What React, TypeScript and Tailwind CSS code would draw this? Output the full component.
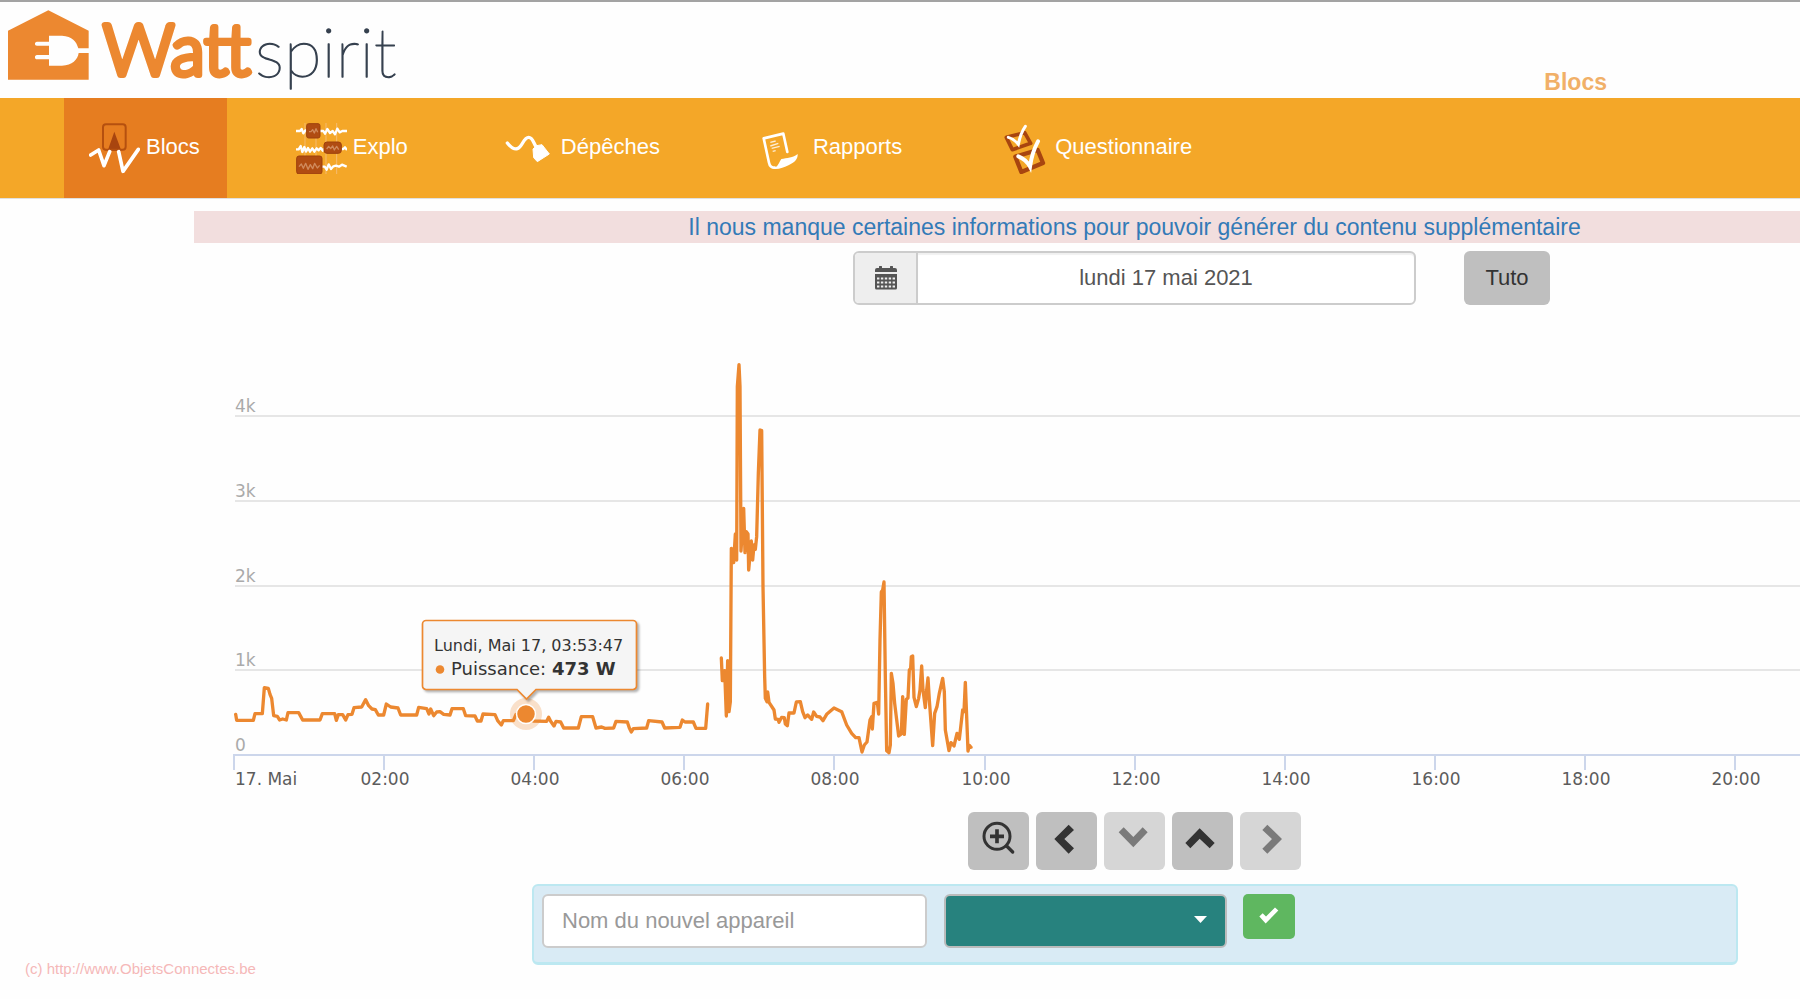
import type { ReactNode } from "react";

const NIGHT =
  "47,343 50,361 100,361 105,341 127,341 133,263 145,265 150,283 155,295 161,347 172,349 179,360 188,357 199,360 204,338 236,338 248,360 300,360 307,341 344,341 349,361 355,344 368,344 377,360 384,344 396,343 402,323 425,321 437,299 446,317 456,327 466,329 475,345 491,345 499,312 512,321 534,324 542,345 590,345 596,322 620,326 627,342 632,327 641,347 650,336 660,335 671,343 690,345 696,326 730,326 737,347 765,348 772,363 783,363 789,342 825,344 833,362 844,375 850,362 880,362 888,343 918,343 940,363 980,364 986,352 992,364 1002,378 1008,364 1022,366 1031,384 1075,384 1084,350 1118,350 1128,384 1145,381 1155,385 1181,384 1188,364 1222,366 1228,384 1234,396 1240,386 1280,384 1286,362 1326,366 1334,384 1380,382 1387,360 1395,366 1420,366 1428,385 1457,385 1463,312";
const MORNING =
  "94,954 97,1022 104,992 109,1128 113,962 117,1115 121,1085 124,625 131,668 136,582 140,660 142,140 147,74 150,140 153,633 161,505 165,638 169,575 174,582 176,690 184,603 188,660 192,615 196,628 200,590 205,400 210,270 215,272 219,740 224,1010 226,1075 231,1085 233,1056 237,1087 252,1110 256,1137 264,1138 267,1147 275,1132 283,1133 286,1152 292,1157 297,1119 312,1119 319,1086 331,1085 338,1115 345,1133 353,1125 365,1138 371,1116 380,1129 390,1131 399,1142 410,1123 432,1104 455,1115 470,1155 485,1180 497,1193 507,1193 516,1236 523,1215 531,1206 540,1140 545,1130 547,1167 552,1090 562,1087 566,1122 570,900 574,756 578,750 582,726 586,1010 590,1232 597,1238 601,1215 604,1000 609,1030 614,1090 626,1188 634,1182 638,1070 643,1183 649,1078 654,1074 658,990 662,985 664,950 668,948 672,1072 679,1100 686,1075 690,1050 695,978 699,1050 706,1103 710,1050 714,1014 718,1080 728,1217 734,1120 741,1100 748,1060 758,1015 763,1055 766,1170 777,1232 783,1208 792,1218 801,1180 808,1198 818,1110 822,1115 826,1027 830,1130 834,1233 838,1216 843,1222";

const Y_TICKS = [
  { label: "4k", y: 96 },
  { label: "3k", y: 181 },
  { label: "2k", y: 266 },
  { label: "1k", y: 350 },
  { label: "0", y: 435 },
];
const HOURS = ["02:00", "04:00", "06:00", "08:00", "10:00", "12:00", "14:00", "16:00", "18:00", "20:00"];

function Chart() {
  return (
    <svg className="block h-[478px] w-full font-['DejaVu_Sans',sans-serif]" role="img" aria-label="Puissance, lundi 17 mai 2021">
      {Y_TICKS.map((t) => (
        <g key={t.label}>
          {t.label !== "0" && <line x1="41" x2="100%" y1={t.y} y2={t.y} stroke="#e6e6e6" strokeWidth="2" />}
          <text x="41" y={t.y - 4} fontSize="17" fill="#aaa">{t.label}</text>
        </g>
      ))}
      <line x1="39" x2="100%" y1="435" y2="435" stroke="#ccd6eb" strokeWidth="2" />
      <line x1="40" x2="40" y1="435" y2="450" stroke="#ccd6eb" strokeWidth="2" />
      <text x="41" y="465" fontSize="17" fill="#5c5c5c">17. Mai</text>
      {HOURS.map((h, i) => {
        const x = Math.round(40 + (i + 1) * 150.1);
        return (
          <g key={h}>
            <line x1={x} x2={x} y1="435" y2="450" stroke="#ccd6eb" strokeWidth="2" />
            <text x={x + 1} y="465" fontSize="17" fill="#5c5c5c" textAnchor="middle">{h}</text>
          </g>
        );
      })}
      <g fill="none" stroke="#ec8830" strokeWidth="10" strokeLinejoin="round" strokeLinecap="round">
        <polyline points={NIGHT} transform="translate(26 280) scale(.33333)" />
        <polyline points={MORNING} transform="translate(496 20) scale(.33333)" />
      </g>
      <circle cx="332" cy="394" r="16" fill="#ec8830" fillOpacity=".25" />
      <circle cx="332" cy="394" r="9.5" fill="#ec8830" stroke="#fff" strokeWidth="1.5" />
      <path
        d="M232 300.500H439a3.500 3.500 0 0 1 3.500 3.500V366a3.500 3.500 0 0 1-3.500 3.500H342l-9.500 9.500-9.500-9.500H232a3.500 3.500 0 0 1-3.500-3.500V304a3.500 3.500 0 0 1 3.500-3.500z"
        fill="#f7f7f7"
        fillOpacity=".97"
        stroke="#ec8830"
        strokeWidth="1.700"
        className="drop-shadow-[2px_2px_1px_rgba(0,0,0,0.3)]"
      />
      <text x="240" y="331" fontSize="16" fill="#333">Lundi, Mai 17, 03:53:47</text>
      <circle cx="246" cy="349.500" r="4.300" fill="#ec8830" />
      <text x="257" y="355" fontSize="18" fill="#333">
        Puissance: <tspan fontWeight="bold">473 W</tspan>
      </text>
    </svg>
  );
}

function Logo() {
  return (
    <a href="#" aria-label="Wattspirit" className="flex items-start pl-2">
      <svg className="mt-[8px] h-[71px] w-[81px]" viewBox="0 0 243 213">
        <path d="M0 62 121 1l121 61v53h-31c-6-21-18-36-49-38h-39v18H87c-8 0-8 12 0 12h36v28H87c-8 0-8 13 0 13h36v19h39c31-1 47-18 50-38h30v80H0z" fill="#ec8830" />
      </svg>
      <svg className="h-24 w-[312px] font-['Lato',sans-serif]" viewBox="0 0 312 96" strokeLinejoin="round">
        <text x="14" y="73" fontSize="70" fontWeight="300" fill="#ec8830" stroke="#ec8830" strokeWidth="6">Watt</text>
        <text x="166" y="75" fontSize="69" fontWeight="200" fill="#36414f" stroke="#36414f" strokeWidth="1.300">spirit</text>
      </svg>
    </a>
  );
}

function BlocsIcon() {
  return (
    <svg className="size-[51px]" viewBox="0 0 153 153" fill="none">
      <path d="M76 26 97 83H56z" fill="#a8450f" />
      <rect x="42" y="4" width="68" height="76" rx="9" stroke="#b5500f" strokeWidth="6" />
      <path d="M5 96l24-15 16 47 17-42M89 86l13 59 46-66" stroke="#fff" strokeWidth="11" strokeLinecap="round" strokeLinejoin="round" />
    </svg>
  );
}

function ExploIcon() {
  return (
    <svg className="size-[51px]" viewBox="0 0 153 153" fill="none" strokeLinejoin="round">
      <path d="M27 0v153M60 0v153M90 0v153M122 0v153" stroke="#f7c9a0" strokeOpacity=".6" strokeWidth="3" />
      <g stroke="#fff" strokeWidth="7">
        <path d="M0 24h12l5-6 5 13 6-9h4M72 24h10l5 8 7-14 8 12 8-6 7 10 7-17 7 11 8-4h14" />
        <path d="M0 79h8l6-10 5 18 6-15 5 14 6-11 6 11 7-10 6 10 7-10 6 6 6-7 6 8 4-6M136 78h6l5-5 6 8" />
        <path d="M78 131h8l6 9 6-16 7 14 7-8 8-2 9 3 9-6 14 6" />
      </g>
      <g fill="#b04c12" stroke="#9d400c" strokeWidth="3">
        <rect x="32" y="2" width="40" height="43" rx="6" />
        <rect x="84" y="57" width="52" height="34" rx="9" />
        <rect x="2" y="99" width="76" height="54" rx="7" />
      </g>
      <g stroke="#d08a5c" strokeWidth="4">
        <path d="M39 26h6l5-6 5 10 5-13 5 11" />
        <path d="M92 78l6-8 6 7 6-8 5 12 7-11 6 10" />
        <path d="M9 131l7-8 6 13 7-15 7 18 7-14 7 12 6-16 8 14 7-8" />
      </g>
    </svg>
  );
}

function DepechesIcon() {
  return (
    <svg className="size-[51px]" viewBox="-3 0 153 153">
      <path d="M7 60c11 14 21 20 30 17 16-5 18-34 34-34 12 0 14 16 22 28" fill="none" stroke="#fff" strokeWidth="10" strokeLinecap="round" />
      <path d="M84 78l11-10 16-3 22 28-36 23-11-12z" fill="#fff" stroke="#fff" strokeWidth="3" strokeLinejoin="round" />
    </svg>
  );
}

function RapportsIcon() {
  return (
    <svg className="size-[51px]" viewBox="-5 0 153 153" fill="none">
      <path d="M89 87 77 32 18 46 34 119c2 10 7 15 17 15" stroke="#fff" strokeWidth="8" strokeLinecap="round" strokeLinejoin="round" />
      <path d="M46 135c16-2 18-18 25-27 16-3 36-4 49-15 1 17-11 26-26 33-14 6-31 14-45 12z" fill="#fff" />
      <path d="M38 58l16-4M38 69l24-8M42 76l24-6M45 85l9-2" stroke="#fff" strokeOpacity=".8" strokeWidth="4" />
    </svg>
  );
}

function QuestionnaireIcon() {
  return (
    <svg className="size-[51px]" viewBox="-14 0 153 153" fill="none">
      <path d="M11 43 66 29 84 61 29 80z" stroke="#a8450f" strokeWidth="11" strokeLinejoin="round" />
      <path d="M38 101 105 81 121 120 56 147z" stroke="#a8450f" strokeWidth="13" strokeLinejoin="round" />
      <path d="M17 43c12 3 21 10 30 21 4-20 11-40 21-54" stroke="#fff" strokeWidth="9" strokeLinecap="round" />
      <path d="M47 100c15 6 26 14 35 31 4-28 12-54 24-76" stroke="#fff" strokeWidth="12" strokeLinecap="round" />
    </svg>
  );
}

const NAV: { label: string; icon: ReactNode; active?: boolean }[] = [
  { label: "Blocs", icon: <BlocsIcon />, active: true },
  { label: "Explo", icon: <ExploIcon /> },
  { label: "Dépêches", icon: <DepechesIcon /> },
  { label: "Rapports", icon: <RapportsIcon /> },
  { label: "Questionnaire", icon: <QuestionnaireIcon /> },
];

const CONTROLS: { label: string; icon: ReactNode; disabled?: boolean }[] = [
  {
    label: "Zoomer",
    icon: (
      <g fill="none" stroke="#333">
        <circle cx="87" cy="73" r="39" strokeWidth="9" />
        <path d="M66 73h42M87 52v42" strokeWidth="11" />
        <path d="M116 102l18 18" strokeWidth="10" strokeLinecap="round" />
      </g>
    ),
  },
  { label: "Précédent", icon: <path d="M55 81 98 38l16 16-29 27 29 28-16 16z" /> },
  { label: "Descendre", icon: <path d="M59 46l29 29 28-29 15 15-43 45-44-45z" />, disabled: true },
  { label: "Monter", icon: <path d="M83 49l45 44-15 16-30-29-28 29-15-16z" /> },
  { label: "Suivant", icon: <path d="M82 38l44 43-44 44-15-15 29-29-29-27z" />, disabled: true },
];

function CalendarIcon() {
  return (
    <svg className="h-[24px] w-[22px]" viewBox="0 0 22 24" fill="#555">
      <path d="M0 6V4a2 2 0 0 1 2-2h2V1a1 1 0 0 1 3 0v1h8V1a1 1 0 0 1 3 0v1h2a2 2 0 0 1 2 2v2z" />
      <path d="M0 8h22v14a1.500 1.500 0 0 1-1.500 1.500h-19A1.500 1.500 0 0 1 0 22z" />
      <path d="M2 12.500h18M2 16.500h18M2 20.500h18" stroke="#eee" strokeWidth="2.200" strokeDasharray="2.400 1.500" />
    </svg>
  );
}

export default function App() {
  return (
    <div className="min-h-screen overflow-x-hidden border-t-2 border-[#a3a3a3] bg-[#fefefe] font-['Liberation_Sans',Arial,sans-serif] text-[22px] leading-8">
      <header className="flex h-24 justify-between pr-[193px]">
        <Logo />
        <h1 className="self-end text-[23px] font-bold text-[#f1b068]">Blocs</h1>
      </header>

      <nav className="flex h-[101px] gap-11 border-b border-[#e0e0e0] bg-[#f4a728] pl-16">
        {NAV.map((item) => (
          <a
            key={item.label}
            href="#"
            aria-current={item.active ? "page" : undefined}
            className={`flex items-center gap-[6px] pr-[27px] pl-[25px] text-white ${item.active ? "bg-[#e67d20]" : ""}`}
          >
            {item.icon}
            <span className="pb-[2px]">{item.label}</span>
          </a>
        ))}
      </nav>

      <main className="mr-[-275px] ml-[194px] pt-3">
        <p className="bg-[#f2dede] text-center text-[23px]">
          <a href="#" className="text-[#337ab7]">
            Il nous manque certaines informations pour pouvoir générer du contenu supplémentaire
          </a>
        </p>

        <div className="mt-2 grid grid-cols-[1fr_563px_1fr]">
          <label className="col-start-2 flex h-[54px] rounded-md border-2 border-[#ccc] bg-white">
            <span className="flex w-[63px] items-center justify-center rounded-l border-r-2 border-[#ccc] bg-[#eee]">
              <CalendarIcon />
            </span>
            <input
              type="text"
              aria-label="Date"
              defaultValue="lundi 17 mai 2021"
              className="min-w-0 flex-1 rounded-r text-center text-[#555] shadow-[inset_0_2px_1px_rgba(0,0,0,0.06)]"
            />
          </label>
          <button className="ml-12 h-[54px] w-[86px] rounded-md bg-[#bfbfbf] text-[#333]">Tuto</button>
        </div>

        <div className="mt-[15px]">
          <Chart />
        </div>

        <div className="mt-[14px] flex justify-center gap-[7px]">
          {CONTROLS.map((c) => (
            <button
              key={c.label}
              aria-label={c.label}
              disabled={c.disabled}
              className={`h-[58px] w-[61px] rounded-md ${c.disabled ? "bg-[#d6d6d6]" : "bg-[#bfbfbf]"}`}
            >
              <svg className="h-[58px] w-[61px]" viewBox="0 0 183 174" fill={c.disabled ? "#7a7a7a" : "#333"}>
                {c.icon}
              </svg>
            </button>
          ))}
        </div>

        <form className="mr-[337px] ml-[338px] mt-[14px] flex h-[81px] items-start rounded-md border-2 border-b-[3px] border-[#bce8f1] bg-[#d9ebf5] p-2">
          <input
            type="text"
            aria-label="Nom du nouvel appareil"
            placeholder="Nom du nouvel appareil"
            className="h-[54px] w-[385px] rounded-md border-2 border-[#ccc] bg-white px-[18px] placeholder:text-[#999]"
          />
          <div className="relative ml-[17px]">
            <select
              aria-label="Catégorie"
              className="block h-[54px] w-[283px] appearance-none rounded-md border-2 border-[#bbb] bg-[#27827e] px-4 text-white"
            >
              <option value=""></option>
            </select>
            <svg className="pointer-events-none absolute top-[22px] right-5 h-[7px] w-[13px]" viewBox="0 0 13 7">
              <path d="M0 0h13L6.500 7z" fill="#fff" />
            </svg>
          </div>
          <button type="button" aria-label="Valider" className="ml-4 flex h-[45px] w-[52px] justify-center rounded-[5px] bg-[#5fb760] pt-[13px]">
            <svg className="h-[17px] w-[20px]" viewBox="0 0 60 50" fill="#fff">
              <path d="M1 28 11 18l10 10L48 1l10 9-38 39z" />
            </svg>
          </button>
        </form>
      </main>

      <footer className="-mt-2 ml-[25px] pb-4 text-[15px] leading-6 text-[#f5b8b8]">(c) http://www.ObjetsConnectes.be</footer>
    </div>
  );
}
